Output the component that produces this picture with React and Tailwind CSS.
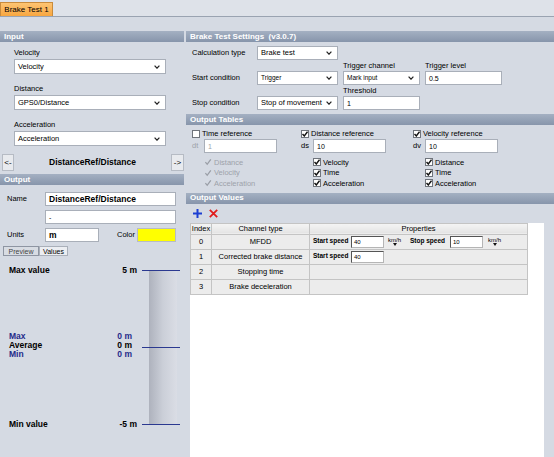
import React from "react";

// ----------------------------------------------------------------------
// small building blocks

function Bar({ children, className = "" }) {
  return (
    <div
      className={`h-[11px] shrink-0 flex items-center pl-[4px] bg-gradient-to-b from-[#a4b0c2] to-[#8795ab] text-white font-bold text-[8px] whitespace-pre ${className}`}
    >
      {children}
    </div>
  );
}

function Chevron() {
  return (
    <svg width="6" height="4" viewBox="0 0 6 4" className="shrink-0">
      <path d="M0.6 0.6 L3 3.2 L5.4 0.6" fill="none" stroke="#222" strokeWidth="1.2" />
    </svg>
  );
}

function Select({ value, small, className = "" }) {
  return (
    <div
      className={`bg-white border border-[#a9afb9] flex items-center justify-between pl-[3px] pr-[5px] ${className}`}
    >
      <span className={small ? "text-[6.5px]" : "text-[7.5px]"}>{value}</span>
      <Chevron />
    </div>
  );
}

function TextBox({ value, bold, gray, className = "" }) {
  return (
    <div
      className={`bg-white border border-[#a9afb9] flex items-center pl-[3px] ${
        bold ? "font-bold text-[8.5px]" : "text-[7px]"
      } ${gray ? "text-[#9da2aa]" : "text-black"} ${className}`}
    >
      {value}
    </div>
  );
}

function Check({ checked, disabled }) {
  if (disabled) {
    return (
      <svg width="8" height="8" viewBox="0 0 8 8" className="shrink-0">
        <path d="M1.4 4.2 L3.2 6.3 L6.8 1.4" fill="none" stroke="#9a9ea6" strokeWidth="1.3" />
      </svg>
    );
  }
  return (
    <div className="w-[8px] h-[8px] shrink-0 bg-white border border-[#6f747c] flex items-center justify-center">
      {checked && (
        <svg width="6" height="6" viewBox="0 0 6 6">
          <path d="M0.5 3 L2.3 5 L5.5 0.7" fill="none" stroke="#111" strokeWidth="1.4" />
        </svg>
      )}
    </div>
  );
}

function RefColumn({ width, checked, title, prefix, value, disabled, items }) {
  return (
    <div className={`${width} shrink-0 flex flex-col`}>
      <div className="h-[10px] flex items-center gap-[2px]">
        <Check checked={checked} />
        <span>{title}</span>
      </div>
      <div className="h-[14px] flex items-center">
        <span className={`w-[12px] ${disabled ? "text-[#9da2aa]" : ""}`}>{prefix}</span>
        <TextBox value={value} gray={disabled} className="w-[73px] h-[14px]" />
      </div>
      <div className="mt-[4px] pl-[12px] flex flex-col">
        {items.map((item) => (
          <div key={item} className="h-[10.5px] flex items-center gap-[2px]">
            <Check checked disabled={disabled} />
            <span className={disabled ? "text-[#9da2aa]" : ""}>{item}</span>
          </div>
        ))}
      </div>
    </div>
  );
}

function SmallInput({ value }) {
  return (
    <div className="w-[33px] h-[12px] bg-white border border-[#b5b5b5] border-t-[#555] border-l-[#555] flex items-center pl-[2px] text-[6px] font-normal">
      {value}
    </div>
  );
}

function Unit() {
  return (
    <div className="w-[15px] flex flex-col items-center text-[6px]">
      <span>km/h</span>
      <svg width="4" height="3" viewBox="0 0 4 3">
        <path d="M0 0 H4 L2 3 Z" fill="#111" />
      </svg>
    </div>
  );
}

const inputs = [
  { label: "Velocity", value: "Velocity" },
  { label: "Distance", value: "GPS0/Distance" },
  { label: "Acceleration", value: "Acceleration" },
];

const channels = ["MFDD", "Corrected brake distance", "Stopping time", "Brake deceleration"];

const cell = "border border-[#c4c4c4] bg-[#ececec] p-0 text-center align-middle";

// ----------------------------------------------------------------------

export default function App() {
  return (
    <div className="w-[554px] h-[457px] overflow-hidden bg-[#d5dae3] flex flex-col text-[7.5px] leading-none text-black font-['Liberation_Sans',Arial,sans-serif]">
      {/* tab strip */}
      <div className="h-[17px] shrink-0 bg-[#dee2e9] border-b border-[#9aa3b1] flex items-end">
        <div className="h-[14px] w-[53px] bg-gradient-to-b from-[#fdc472] to-[#f8a63e] border border-b-0 border-[#c98b3c] flex items-center justify-center text-[8px]">
          Brake Test 1
        </div>
      </div>
      <div className="h-[14px] shrink-0" />

      <div className="flex flex-1 min-h-0 gap-[2px]">
        {/* left panel */}
        <div className="w-[184px] shrink-0 flex flex-col">
          <Bar>Input</Bar>
          <div className="pl-[14px] pt-[5px] flex flex-col">
            {inputs.map((g, i) => (
              <div key={g.label} className={i ? "mt-[9px]" : ""}>
                <div className="h-[12px] flex items-center">{g.label}</div>
                <Select value={g.value} className="w-[152px] h-[15px]" />
              </div>
            ))}
          </div>

          <div className="mt-[8px] h-[17px] flex items-center justify-between pl-[2px]">
            <div className="w-[12px] h-[17px] bg-[#e8eaee] border border-[#b6bbc4] flex items-center justify-center text-[8px]">
              &lt;-
            </div>
            <span className="font-bold text-[8.5px]">DistanceRef/Distance</span>
            <div className="w-[13px] h-[17px] bg-[#e8eaee] border border-[#b6bbc4] flex items-center justify-center text-[8px]">
              -&gt;
            </div>
          </div>

          <Bar className="mt-[3px]">Output</Bar>
          <div className="flex flex-col pt-[7px]">
            <div className="flex items-center h-[14px]">
              <span className="w-[45px] pl-[7px]">Name</span>
              <TextBox bold value="DistanceRef/Distance" className="w-[131px] h-[14px]" />
            </div>
            <div className="flex items-center h-[14px] mt-[4px] pl-[45px]">
              <TextBox value="-" className="w-[131px] h-[14px]" />
            </div>
            <div className="flex items-center h-[14px] mt-[4px]">
              <span className="w-[45px] pl-[7px]">Units</span>
              <TextBox bold value="m" className="w-[54px] h-[14px]" />
              <span className="ml-[18px] w-[20px]">Color</span>
              <div className="w-[39px] h-[14px] bg-[#ffff00] border border-[#b8bcc4]" />
            </div>
            <div className="flex mt-[4px] ml-[3px] h-[10px] text-[7px]">
              <div className="w-[36px] bg-[#d8dce3] border border-[#8e95a2] flex items-center justify-center text-[#444]">
                Preview
              </div>
              <div className="w-[29px] bg-[#eceef2] border border-[#aab0ba] flex items-center justify-center">
                Values
              </div>
            </div>

            {/* gauge */}
            <div className="flex mt-[9px]">
              <div className="w-[137px] pl-[9px] flex flex-col font-bold text-[8.5px]">
                <div className="h-[10px] flex items-center justify-between">
                  <span>Max value</span>
                  <span>5 m</span>
                </div>
                <div className="h-[57px]" />
                <div className="h-[9px] flex items-center justify-between pr-[5px] text-[#1f2a8a]">
                  <span>Max</span>
                  <span>0 m</span>
                </div>
                <div className="h-[9px] flex items-center justify-between pr-[5px]">
                  <span>Average</span>
                  <span>0 m</span>
                </div>
                <div className="h-[9px] flex items-center justify-between pr-[5px] text-[#1f2a8a]">
                  <span>Min</span>
                  <span>0 m</span>
                </div>
                <div className="h-[60px]" />
                <div className="h-[10px] flex items-center justify-between">
                  <span>Min value</span>
                  <span>-5 m</span>
                </div>
              </div>
              <div className="ml-[5px] w-[38px] flex flex-col">
                <div className="h-[5px]" />
                <div className="h-px bg-[#2b3990]" />
                <div className="h-[76px] ml-[7px] w-[28px] bg-gradient-to-r from-[#aeb2bd] via-[#cbcfd8] to-[#dadde5]" />
                <div className="h-px bg-[#2b3990]" />
                <div className="h-[76px] ml-[7px] w-[28px] bg-gradient-to-r from-[#aeb2bd] via-[#cbcfd8] to-[#dadde5]" />
                <div className="h-px bg-[#2b3990]" />
              </div>
            </div>
          </div>
        </div>

        {/* right panel */}
        <div className="flex-1 min-w-0 flex flex-col">
          <Bar>Brake Test Settings  (v3.0.7)</Bar>
          <div className="grid grid-cols-[60px_81px_77px_77px] grid-rows-[14px_11px_14px_11px_14px] gap-x-[5px] pt-[4px] pl-[6px]">
            <div className="col-start-1 row-start-1 flex items-center">Calculation type</div>
            <Select value="Brake test" className="col-start-2 row-start-1 h-[14px]" />
            <div className="col-start-3 row-start-2 flex items-center">Trigger channel</div>
            <div className="col-start-4 row-start-2 flex items-center">Trigger level</div>
            <div className="col-start-1 row-start-3 flex items-center">Start condition</div>
            <Select small value="Trigger" className="col-start-2 row-start-3 h-[14px]" />
            <Select small value="Mark input" className="col-start-3 row-start-3 h-[14px]" />
            <TextBox value="0.5" className="col-start-4 row-start-3 h-[14px]" />
            <div className="col-start-3 row-start-4 flex items-center">Threshold</div>
            <div className="col-start-1 row-start-5 flex items-center">Stop condition</div>
            <Select value="Stop of movement" className="col-start-2 row-start-5 h-[14px]" />
            <TextBox value="1" className="col-start-3 row-start-5 h-[14px]" />
          </div>

          <Bar className="mt-[4px]">Output Tables</Bar>
          <div className="flex pl-[6px] pt-[4px]">
            <RefColumn
              width="w-[109px]"
              checked={false}
              title="Time reference"
              prefix="dt"
              value="1"
              disabled
              items={["Distance", "Velocity", "Acceleration"]}
            />
            <RefColumn
              width="w-[112px]"
              checked
              title="Distance reference"
              prefix="ds"
              value="10"
              items={["Velocity", "Time", "Acceleration"]}
            />
            <RefColumn
              width="w-[100px]"
              checked
              title="Velocity reference"
              prefix="dv"
              value="10"
              items={["Distance", "Time", "Acceleration"]}
            />
          </div>

          <Bar className="mt-[4px]">Output Values</Bar>
          <div className="h-[11px] mt-[4px] flex items-center pl-[7px] gap-[7px]">
            <svg width="9" height="9" viewBox="0 0 9 9">
              <path d="M4.5 0 V9 M0 4.5 H9" stroke="#1d3fd2" strokeWidth="2" />
            </svg>
            <svg width="9" height="9" viewBox="0 0 9 9">
              <path d="M0.8 0.8 L8.2 8.2 M8.2 0.8 L0.8 8.2" stroke="#e11d1d" strokeWidth="1.8" />
            </svg>
          </div>

          <div className="flex-1 mt-[4px] ml-[4px] w-[354px] bg-white">
            <table className="table-fixed border-collapse">
              <colgroup>
                <col className="w-[21px]" />
                <col className="w-[98px]" />
                <col className="w-[218px]" />
              </colgroup>
              <thead>
                <tr className="h-[11px]">
                  <th className={`${cell} font-normal bg-gradient-to-b from-[#f5f5f5] to-[#e3e3e3]`}>Index</th>
                  <th className={`${cell} font-normal bg-gradient-to-b from-[#f5f5f5] to-[#e3e3e3]`}>Channel type</th>
                  <th className={`${cell} font-normal bg-gradient-to-b from-[#f5f5f5] to-[#e3e3e3]`}>Properties</th>
                </tr>
              </thead>
              <tbody>
                {channels.map((name, i) => (
                  <tr key={name} className="h-[15px]">
                    <td className={cell}>{i}</td>
                    <td className={cell}>{name}</td>
                    <td className={`${cell} text-left`}>
                      {i < 2 && (
                        <div className="flex items-center pl-[3px] h-[14px]">
                          <span className="w-[38px] font-bold text-[6.5px]">Start speed</span>
                          <SmallInput value="40" />
                          {i === 0 && (
                            <>
                              <div className="ml-[3px]">
                                <Unit />
                              </div>
                              <span className="ml-[8px] w-[40px] font-bold text-[6.5px]">Stop speed</span>
                              <SmallInput value="10" />
                              <div className="ml-[4px]">
                                <Unit />
                              </div>
                            </>
                          )}
                        </div>
                      )}
                    </td>
                  </tr>
                ))}
              </tbody>
            </table>
          </div>
        </div>
      </div>
    </div>
  );
}
